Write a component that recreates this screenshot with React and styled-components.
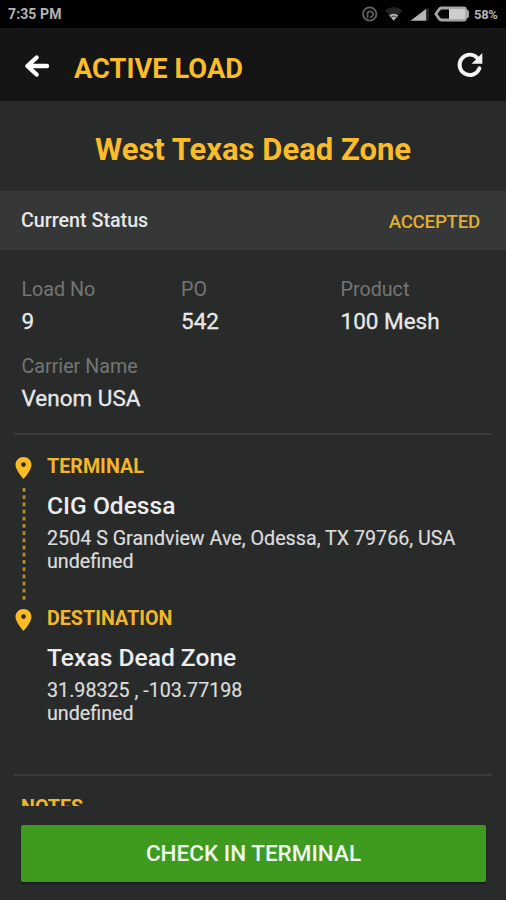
import React from 'react';
import styled, {createGlobalStyle} from 'styled-components';

const GlobalStyle = createGlobalStyle`
  * {
    box-sizing: border-box;
  }
  body {
    margin: 0;
    background: #292b2a;
    font-family: Roboto, 'Liberation Sans', sans-serif;
  }
`;

const Screen = styled.div`
  width: 506px;
  height: 900px;
  display: flex;
  flex-direction: column;
  overflow: hidden;
  background: #292b2a;
  white-space: nowrap;
`;

const StatusBar = styled.div`
  flex: none;
  height: 28px;
  display: flex;
  justify-content: space-between;
  align-items: center;
  padding-left: 8px;
  background: #000;
  color: #b4b4b4;
`;

const Clock = styled.span`
  font-size: 14px;
  font-weight: 700;
  letter-spacing: 0.1px;
`;

const Percent = styled.span`
  width: 36px;
  padding-left: 4px;
  font-size: 13px;
  font-weight: 700;
  letter-spacing: -0.3px;
`;

const StatusIcons = styled.div`
  display: flex;
  align-items: center;
`;

const Header = styled.header`
  flex: none;
  height: 73px;
  display: flex;
  align-items: center;
  padding: 3px 22px 0 23px;
  background: #151515;
`;

const HeaderTitle = styled.h1`
  flex: 1;
  margin: 5px 0 0 23px;
  font-size: 27.3px;
  font-weight: 700;
  line-height: 32px;
  color: #f9bd2b;
`;

const SiteName = styled.h2`
  flex: none;
  height: 90px;
  margin: 0;
  padding-top: 7px;
  font-size: 31px;
  font-weight: 700;
  line-height: 83px;
  text-align: center;
  color: #fabd29;
`;

const StatusRow = styled.div`
  flex: none;
  height: 59px;
  display: flex;
  justify-content: space-between;
  align-items: center;
  padding: 0 26px 2px 21px;
  background: #363837;
`;

const StatusLabel = styled.span`
  padding-top: 2px;
  font-size: 19.7px;
  font-weight: 500;
  color: #e6e6e6;
`;

const StatusValue = styled.span`
  padding-top: 4px;
  font-size: 18.8px;
  font-weight: 500;
  letter-spacing: -0.3px;
  color: #dfae31;
`;

const Body = styled.main`
  flex: 1;
  min-height: 0;
  overflow: hidden;
`;

const Details = styled.div`
  display: grid;
  grid-template-columns: 159.5px 159.5px 1fr;
  row-gap: 18px;
  padding: 27px 0 20px 21.5px;
`;

const Label = styled.div`
  font-size: 19.7px;
  line-height: 26px;
  color: #747675;
`;

const Value = styled.div`
  padding: 4px 0 1px;
  font-size: 22.5px;
  line-height: 28px;
  color: #e8e8e8;
  -webkit-text-stroke: 0.3px #e8e8e8;
`;

const Divider = styled.div`
  height: 2px;
  margin: 0 14px;
  background: #393b3a;
`;

const Stops = styled.div`
  padding: 19px 14px 49px 15px;
`;

const StopRow = styled.div`
  display: flex;
  min-height: ${props => (props.$linked ? '152px' : '119px')};
`;

const Track = styled.div`
  flex: none;
  width: 17px;
  margin-right: 15px;
  display: flex;
  flex-direction: column;
  align-items: center;
  padding-top: 3px;
`;

const StopTitle = styled.div`
  font-size: 19.7px;
  font-weight: 700;
  line-height: 26px;
  color: #f2b62a;
`;

const StopName = styled.div`
  margin-top: 12px;
  font-size: 24.6px;
  font-weight: 500;
  line-height: 28px;
  color: #ececec;
`;

const Address = styled.div`
  margin-top: 8px;
  font-size: 19.7px;
  line-height: 22.5px;
  color: #dcdcdc;
  -webkit-text-stroke: 0.2px #dcdcdc;
`;

const Notes = styled(StopTitle)`
  padding: 19px 0 0 21px;
`;

const Footer = styled.footer`
  flex: none;
  height: 94px;
  padding: 19px 20px 0 21px;
`;

const CheckInButton = styled.button`
  display: block;
  width: 100%;
  height: 57px;
  padding: 0 0 2px;
  border: 0;
  border-radius: 2px;
  background: #3f9b20;
  box-shadow: 0 2px 2px rgba(0, 0, 0, 0.35);
  font-family: inherit;
  font-size: 22.5px;
  font-weight: 500;
  color: #f0f8ee;
`;

const DeviceIcons = () => (
  <svg width="110" height="28" viewBox="360 0 110 28" fill="none">
    <circle cx="369.7" cy="14" r="6.7" stroke="#636363" strokeWidth="1.8" />
    <path d="M367.6 18.3V11.4M367.6 13.2a2.8 2.8 0 1 1 2.2 3.8" stroke="#636363" strokeWidth="1.6" />
    <path d="M393.7 20.5l-8.7-10a13 13 0 0 1 17.4 0z" fill="#242424" />
    <path d="M393.7 20.8l-4.6-5.4a7 7 0 0 1 9.2 0z" fill="#b0b0b0" />
    <path d="M391 17.2a4 4 0 0 1 5.4 0" stroke="#333" strokeWidth="1" />
    <path d="M410.5 20.7L426.3 8.7V20.7z" fill="#b5b5b5" />
    <path d="M428 8v12.7" stroke="#2b2b2b" strokeWidth="1.5" />
    <path
      d="M441.5 6.5H464q2.5 0 3 3l2 1.5v6l-2 1.5q-.5 3-3 3H441.5q-2 0-3.3-1.7L434.2 14l4-5.8Q439.5 6.5 441.5 6.5z"
      fill="#a5a5a5"
    />
    <path d="M442 9.5H449V18.5H442q-1.2 0-2-1L437.5 14l2.5-3.5q.8-1 2-1z" fill="#080808" />
    <path d="M449 9h14.5q1.8 0 1.8 2v6q0 2-1.8 2H449z" fill="#cdcdcd" />
  </svg>
);

const BackIcon = () => (
  <svg width="28" height="26" viewBox="23 53 28 26" fill="none" stroke="#fff" strokeWidth="4.4">
    <path d="M36.6 57.5L27.4 66L36.6 74.5M28 66H47" strokeLinecap="round" strokeLinejoin="round" />
  </svg>
);

const RefreshIcon = () => (
  <svg width="28" height="28" viewBox="456 52 28 28" fill="none">
    <path d="M479.4 68.3A10.2 10.2 0 1 1 477 57.6" stroke="#f4f4f4" strokeWidth="3.9" strokeLinecap="round" />
    <path d="M482.3 53V63.7H471.6z" fill="#f4f4f4" />
  </svg>
);

const PinIcon = () => (
  <svg width="17" height="22" viewBox="0 0 17 22">
    <path
      fill="#fbbb24"
      fillRule="evenodd"
      d="M8.5 0C4 0 .5 3.4 .5 7.8c0 5.5 8 14.2 8 14.2s8-8.7 8-14.2C16.5 3.4 13 0 8.5 0zm0 10a2.4 2.4 0 1 1 0-4.8 2.4 2.4 0 0 1 0 4.8z"
    />
  </svg>
);

const DottedLine = styled.svg`
  margin-top: 9px;
`;

const Connector = () => (
  <DottedLine width="4" height="116" viewBox="0 0 4 116">
    <path d="M2 0V113" stroke="#b98c2b" strokeWidth="2.8" strokeDasharray="3.8 3.4" />
  </DottedLine>
);

function Field({label, value}) {
  return (
    <div>
      <Label>{label}</Label>
      <Value>{value}</Value>
    </div>
  );
}

function Stop({title, name, address, linked}) {
  return (
    <StopRow $linked={linked}>
      <Track>
        <PinIcon />
        {linked && <Connector />}
      </Track>
      <div>
        <StopTitle>{title}</StopTitle>
        <StopName>{name}</StopName>
        <Address>
          {address}
          <br />
          undefined
        </Address>
      </div>
    </StopRow>
  );
}

export default function App() {
  return (
    <Screen>
      <GlobalStyle />
      <StatusBar>
        <Clock>7:35 PM</Clock>
        <StatusIcons>
          <DeviceIcons />
          <Percent>58%</Percent>
        </StatusIcons>
      </StatusBar>
      <Header>
        <BackIcon />
        <HeaderTitle>ACTIVE LOAD</HeaderTitle>
        <RefreshIcon />
      </Header>
      <SiteName>West Texas Dead Zone</SiteName>
      <StatusRow>
        <StatusLabel>Current Status</StatusLabel>
        <StatusValue>ACCEPTED</StatusValue>
      </StatusRow>
      <Body>
        <Details>
          <Field label="Load No" value="9" />
          <Field label="PO" value="542" />
          <Field label="Product" value="100 Mesh" />
          <Field label="Carrier Name" value="Venom USA" />
        </Details>
        <Divider />
        <Stops>
          <Stop
            title="TERMINAL"
            name="CIG Odessa"
            address="2504 S Grandview Ave, Odessa, TX 79766, USA"
            linked
          />
          <Stop title="DESTINATION" name="Texas Dead Zone" address="31.98325 , -103.77198" />
        </Stops>
        <Divider />
        <Notes>NOTES</Notes>
      </Body>
      <Footer>
        <CheckInButton>CHECK IN TERMINAL</CheckInButton>
      </Footer>
    </Screen>
  );
}
